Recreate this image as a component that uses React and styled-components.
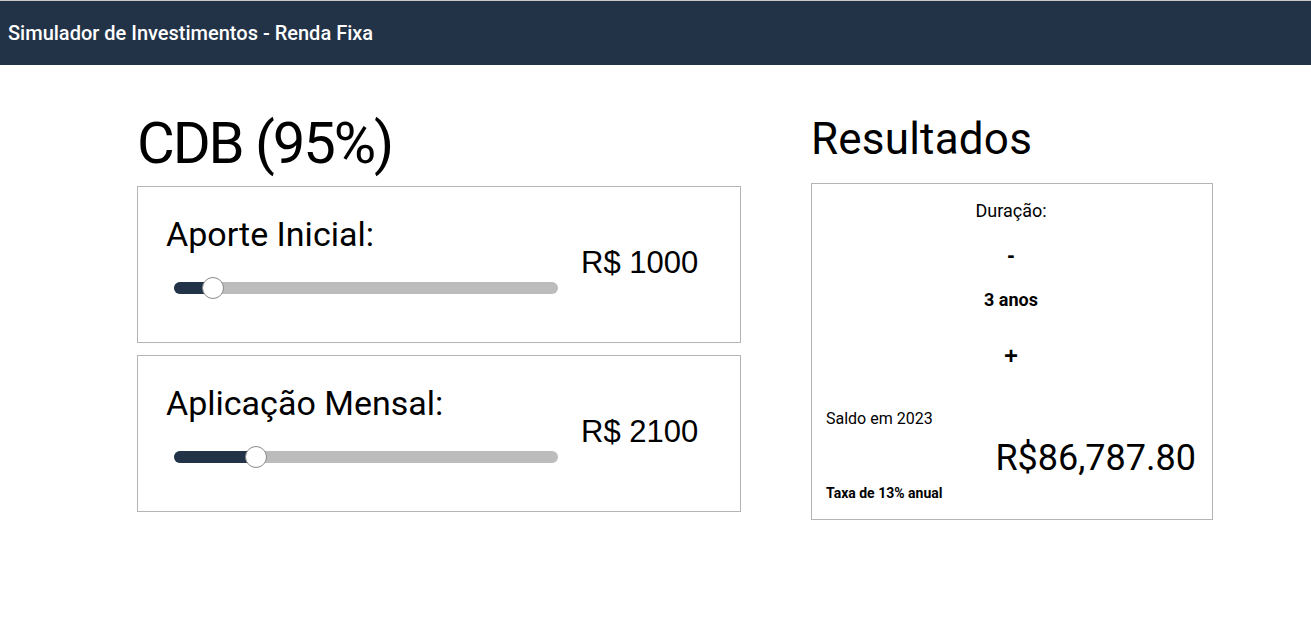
import React from 'react';
import styled, { createGlobalStyle } from 'styled-components';

const GlobalStyle = createGlobalStyle`
  html, body {
    margin: 0;
    padding: 0;
    background: #fff;
    font-family: Roboto, "Noto Sans", sans-serif;
    color: #000;
  }
`;

const Page = styled.div`
  border-top: 1px solid #c8c8c8;
`;

const TopBar = styled.header`
  background-color: #233347;
  color: #fff;
  height: 64px;
  display: flex;
  align-items: center;
  padding: 0 8px;
  font-size: 20px;
  font-weight: 500;
`;

const Main = styled.main`
  display: flex;
  align-items: flex-start;
  gap: 70px;
  padding: 47px 0 0 137px;
`;

const Column = styled.section`
  width: ${(p) => p.width}px;
  display: flex;
  flex-direction: column;
`;

const Title = styled.h1`
  margin: 0;
  font-weight: 400;
  font-size: ${(p) => p.size}px;
  line-height: ${(p) => p.lh}px;
  letter-spacing: ${(p) => p.ls || 0}px;
`;

const Card = styled.div`
  border: 1px solid #b4b4b4;
  margin-top: ${(p) => p.mt || 0}px;
`;

const InputCard = styled(Card)`
  height: 157px;
  box-sizing: border-box;
  display: flex;
  align-items: flex-start;
  padding: 26px 40px 0 28px;
`;

const InputBody = styled.div`
  display: flex;
  flex-direction: column;
  width: 404px;
`;

const Label = styled.div`
  font-size: 34px;
  line-height: 42px;
`;

const Value = styled.div`
  font-family: "Liberation Sans", Arial, sans-serif;
  font-size: 31px;
  line-height: 34px;
  margin: 33px 0 0 11px;
  white-space: nowrap;
`;

const Track = styled.div`
  position: relative;
  margin: 27px 0 0 8px;
  width: 384px;
  height: 12px;
  border-radius: 6px;
  background: #bcbcbc;
`;

const Fill = styled.div`
  height: 100%;
  border-radius: 6px;
  background: #233347;
`;

const Thumb = styled.div`
  position: absolute;
  top: 50%;
  width: 20px;
  height: 20px;
  margin: -11px 0 0 -11px;
  border-radius: 50%;
  background: #fff;
  border: 1px solid #8a8a8a;
`;

const Slider = ({ pos }) => (
  <Track>
    <Fill style={{ width: pos + 4 }} />
    <Thumb style={{ left: pos }} />
  </Track>
);

const ResultCard = styled(Card)`
  height: 337px;
  box-sizing: border-box;
  display: flex;
  flex-direction: column;
  padding: 17px 16px 0 14px;
`;

const Center = styled.div`
  text-align: center;
  font-size: ${(p) => p.size}px;
  font-weight: ${(p) => p.weight || 400};
  line-height: ${(p) => p.lh}px;
  margin-top: ${(p) => p.mt || 0}px;
`;

const StepButton = styled.button`
  align-self: center;
  border: none;
  background: none;
  padding: 0;
  font-family: "Liberation Sans", Arial, sans-serif;
  font-weight: 700;
  font-size: ${(p) => p.size}px;
  line-height: 24px;
  margin-top: ${(p) => p.mt}px;
  color: #000;
  cursor: pointer;
`;

const Small = styled.div`
  font-size: 16px;
  line-height: 19px;
  margin-top: 41px;
`;

const Total = styled.div`
  align-self: flex-end;
  font-size: 36px;
  line-height: 40px;
  margin-top: 10px;
`;

const Rate = styled.div`
  font-size: 14px;
  font-weight: 700;
  line-height: 16px;
  margin-top: 7px;
`;

export default function App() {
  return (
    <Page>
      <GlobalStyle />
      <TopBar>Simulador de Investimentos - Renda Fixa</TopBar>
      <Main>
        <Column width={604}>
          <Title size={58} lh={62} ls={-2.1}>CDB (95%)</Title>
          <InputCard mt={12}>
            <InputBody>
              <Label>Aporte Inicial:</Label>
              <Slider pos={39} />
            </InputBody>
            <Value>R$ 1000</Value>
          </InputCard>
          <InputCard mt={12}>
            <InputBody>
              <Label>Aplicação Mensal:</Label>
              <Slider pos={82} />
            </InputBody>
            <Value>R$ 2100</Value>
          </InputCard>
        </Column>
        <Column width={402}>
          <Title size={44} lh={55} ls={0.2}>Resultados</Title>
          <ResultCard mt={16}>
            <Center size={18} lh={20}>Duração:</Center>
            <StepButton size={22} mt={22}>-</StepButton>
            <Center size={18} weight={700} lh={20} mt={23}>3 anos</Center>
            <StepButton size={24} mt={34}>+</StepButton>
            <Small>Saldo em 2023</Small>
            <Total>R$86,787.80</Total>
            <Rate>Taxa de 13% anual</Rate>
          </ResultCard>
        </Column>
      </Main>
    </Page>
  );
}
